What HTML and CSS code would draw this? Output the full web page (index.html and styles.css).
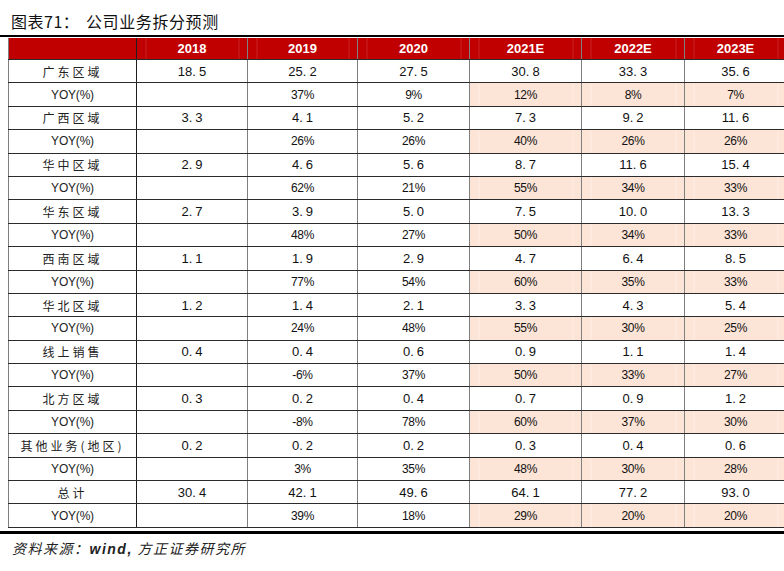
FILE: index.html
```html
<!DOCTYPE html>
<html lang="zh">
<head>
<meta charset="utf-8">
<title>图表71：公司业务拆分预测</title>
<link rel="stylesheet" href="styles.css">
</head>
<body>
<div class="title"><span class="fig">图表71：</span><span class="name">公司业务拆分预测</span></div>
<div class="rule top"></div>
<table class="grid">
<colgroup>
<col class="c0"><col class="c1"><col class="c2"><col class="c3"><col class="c4"><col class="c5"><col class="c6">
</colgroup>
<thead>
<tr class="head"><th class="lab"></th><th>2018</th><th>2019</th><th>2020</th><th>2021E</th><th>2022E</th><th>2023E</th></tr>
</thead>
<tbody>
<tr class="val"><td class="lab">广东区域</td><td>18<span class="p">.</span>5</td><td>25<span class="p">.</span>2</td><td>27<span class="p">.</span>5</td><td>30<span class="p">.</span>8</td><td>33<span class="p">.</span>3</td><td>35<span class="p">.</span>6</td></tr>
<tr class="yoy"><td class="lab">YOY(%)</td><td></td><td>37%</td><td>9%</td><td class="e">12%</td><td class="e">8%</td><td class="e">7%</td></tr>
<tr class="val"><td class="lab">广西区域</td><td>3<span class="p">.</span>3</td><td>4<span class="p">.</span>1</td><td>5<span class="p">.</span>2</td><td>7<span class="p">.</span>3</td><td>9<span class="p">.</span>2</td><td>11<span class="p">.</span>6</td></tr>
<tr class="yoy"><td class="lab">YOY(%)</td><td></td><td>26%</td><td>26%</td><td class="e">40%</td><td class="e">26%</td><td class="e">26%</td></tr>
<tr class="val"><td class="lab">华中区域</td><td>2<span class="p">.</span>9</td><td>4<span class="p">.</span>6</td><td>5<span class="p">.</span>6</td><td>8<span class="p">.</span>7</td><td>11<span class="p">.</span>6</td><td>15<span class="p">.</span>4</td></tr>
<tr class="yoy"><td class="lab">YOY(%)</td><td></td><td>62%</td><td>21%</td><td class="e">55%</td><td class="e">34%</td><td class="e">33%</td></tr>
<tr class="val"><td class="lab">华东区域</td><td>2<span class="p">.</span>7</td><td>3<span class="p">.</span>9</td><td>5<span class="p">.</span>0</td><td>7<span class="p">.</span>5</td><td>10<span class="p">.</span>0</td><td>13<span class="p">.</span>3</td></tr>
<tr class="yoy"><td class="lab">YOY(%)</td><td></td><td>48%</td><td>27%</td><td class="e">50%</td><td class="e">34%</td><td class="e">33%</td></tr>
<tr class="val"><td class="lab">西南区域</td><td>1<span class="p">.</span>1</td><td>1<span class="p">.</span>9</td><td>2<span class="p">.</span>9</td><td>4<span class="p">.</span>7</td><td>6<span class="p">.</span>4</td><td>8<span class="p">.</span>5</td></tr>
<tr class="yoy"><td class="lab">YOY(%)</td><td></td><td>77%</td><td>54%</td><td class="e">60%</td><td class="e">35%</td><td class="e">33%</td></tr>
<tr class="val"><td class="lab">华北区域</td><td>1<span class="p">.</span>2</td><td>1<span class="p">.</span>4</td><td>2<span class="p">.</span>1</td><td>3<span class="p">.</span>3</td><td>4<span class="p">.</span>3</td><td>5<span class="p">.</span>4</td></tr>
<tr class="yoy"><td class="lab">YOY(%)</td><td></td><td>24%</td><td>48%</td><td class="e">55%</td><td class="e">30%</td><td class="e">25%</td></tr>
<tr class="val"><td class="lab">线上销售</td><td>0<span class="p">.</span>4</td><td>0<span class="p">.</span>4</td><td>0<span class="p">.</span>6</td><td>0<span class="p">.</span>9</td><td>1<span class="p">.</span>1</td><td>1<span class="p">.</span>4</td></tr>
<tr class="yoy"><td class="lab">YOY(%)</td><td></td><td>-6%</td><td>37%</td><td class="e">50%</td><td class="e">33%</td><td class="e">27%</td></tr>
<tr class="val"><td class="lab">北方区域</td><td>0<span class="p">.</span>3</td><td>0<span class="p">.</span>2</td><td>0<span class="p">.</span>4</td><td>0<span class="p">.</span>7</td><td>0<span class="p">.</span>9</td><td>1<span class="p">.</span>2</td></tr>
<tr class="yoy"><td class="lab">YOY(%)</td><td></td><td>-8%</td><td>78%</td><td class="e">60%</td><td class="e">37%</td><td class="e">30%</td></tr>
<tr class="val"><td class="lab">其他业务(地区)</td><td>0<span class="p">.</span>2</td><td>0<span class="p">.</span>2</td><td>0<span class="p">.</span>2</td><td>0<span class="p">.</span>3</td><td>0<span class="p">.</span>4</td><td>0<span class="p">.</span>6</td></tr>
<tr class="yoy"><td class="lab">YOY(%)</td><td></td><td>3%</td><td>35%</td><td class="e">48%</td><td class="e">30%</td><td class="e">28%</td></tr>
<tr class="val"><td class="lab">总计</td><td>30<span class="p">.</span>4</td><td>42<span class="p">.</span>1</td><td>49<span class="p">.</span>6</td><td>64<span class="p">.</span>1</td><td>77<span class="p">.</span>2</td><td>93<span class="p">.</span>0</td></tr>
<tr class="yoy"><td class="lab">YOY(%)</td><td></td><td>39%</td><td>18%</td><td class="e">29%</td><td class="e">20%</td><td class="e">20%</td></tr>
</tbody>
</table>
<div class="rule bottom"></div>
<div class="source">资料来源：<b>wind,</b> 方正证券研究所</div>
</body>
</html>
```

FILE: styles.css
```css
html, body {
  margin: 0;
  padding: 0;
  background: #ffffff;
}

body {
  width: 784px;
  height: 571px;
  overflow: hidden;
  color: #000;
  font-family: "Liberation Sans", "Noto Sans CJK SC", sans-serif;
}

.title {
  padding-top: 7px;
  padding-left: 11px;
  box-sizing: border-box;
  height: 35px;
  display: flex;
  align-items: center;
  font-family: "Noto Sans CJK SC", sans-serif;
  font-size: 16px;
  line-height: 16px;
  color: #111;
}

.title .fig {
  letter-spacing: 0.5px;
  width: 75px;
}

.title .name {
  letter-spacing: 0.6px;
}

.rule {
  width: 800px;
  background: #000;
}

.rule.top {
  height: 2px;
  margin-bottom: 1px;
}

.rule.bottom {
  height: 3px;
  margin-top: 3px;
}

.grid {
  margin-left: 8px;
  width: 778px;
  border-collapse: collapse;
  table-layout: fixed;
}

.c0 { width: 128px; }
.c1 { width: 111px; }
.c2 { width: 110px; }
.c3 { width: 112px; }
.c4 { width: 112px; }
.c5 { width: 103px; }
.c6 { width: 102px; }

.grid th,
.grid td {
  padding: 0;
  text-align: center;
  vertical-align: middle;
  border-left: 1px solid #7f7f7f;
  border-right: 1px solid #7f7f7f;
  white-space: nowrap;
}

.grid td {
  border-bottom: 1px solid #2b2b2b;
}

.grid .lab {
  border-right: 1px solid #1e1e1e;
}

.head th {
  height: 21px;
  background-color: #c00000;
  background-image:
    linear-gradient(to right, transparent 8px, rgba(255, 255, 255, 0.14) 8px, rgba(255, 255, 255, 0.14) 9px, transparent 9px),
    linear-gradient(to left, transparent 8px, rgba(255, 255, 255, 0.14) 8px, rgba(255, 255, 255, 0.14) 9px, transparent 9px);
  color: #fff;
  font-size: 13px;
  font-weight: bold;
  border-bottom: 1px solid #2b2b2b;
}

.head th.lab {
  background-image: none;
}

.grid tbody tr {
  height: 23.4px;
}

.val td {
  font-size: 13px;
  color: #111;
}

.val td .p {
  margin-right: 3px;
}

.yoy td {
  font-size: 12px;
  color: #111;
  letter-spacing: -0.3px;
}

.grid td.lab {
  font-family: "Noto Sans CJK SC", sans-serif;
  font-size: 12px;
  letter-spacing: 3px;
  color: #222;
}

.yoy td.lab {
  font-family: "Liberation Sans", "Noto Sans CJK SC", sans-serif;
  letter-spacing: -0.2px;
  font-size: 12px;
}

.grid td.e {
  background-color: #fce4d6;
  background-image:
    linear-gradient(to right, transparent 8px, rgba(255, 255, 255, 0.35) 8px, rgba(255, 255, 255, 0.35) 9px, transparent 9px),
    linear-gradient(to left, transparent 8px, rgba(255, 255, 255, 0.35) 8px, rgba(255, 255, 255, 0.35) 9px, transparent 9px);
}

.source {
  padding-left: 12px;
  margin-top: 4px;
  font-family: "Noto Sans CJK SC", sans-serif;
  font-size: 14px;
  line-height: 20px;
  font-style: italic;
  letter-spacing: 1.5px;
  color: #222;
}

.source b {
  font-family: "Liberation Sans", sans-serif;
  letter-spacing: 1.5px;
}
```
